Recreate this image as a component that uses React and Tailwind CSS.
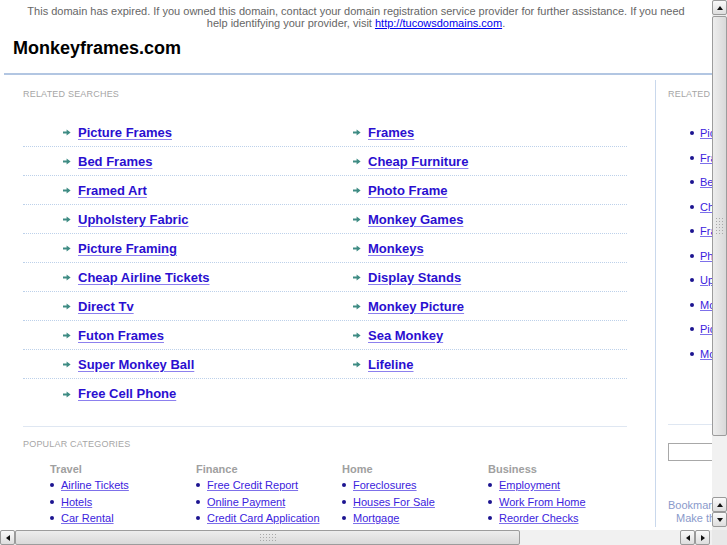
import React from "react";

const related = [
  ["Picture Frames", "Frames"],
  ["Bed Frames", "Cheap Furniture"],
  ["Framed Art", "Photo Frame"],
  ["Upholstery Fabric", "Monkey Games"],
  ["Picture Framing", "Monkeys"],
  ["Cheap Airline Tickets", "Display Stands"],
  ["Direct Tv", "Monkey Picture"],
  ["Futon Frames", "Sea Monkey"],
  ["Super Monkey Ball", "Lifeline"],
  ["Free Cell Phone", null],
];

const sideLinks = [
  "Picture Frames",
  "Frames",
  "Bed Frames",
  "Cheap Furniture",
  "Framed Art",
  "Photo Frame",
  "Upholstery Fabric",
  "Monkey Games",
  "Picture Framing",
  "Monkeys",
];

const categories = [
  { title: "Travel", links: ["Airline Tickets", "Hotels", "Car Rental"] },
  { title: "Finance", links: ["Free Credit Report", "Online Payment", "Credit Card Application"] },
  { title: "Home", links: ["Foreclosures", "Houses For Sale", "Mortgage"] },
  { title: "Business", links: ["Employment", "Work From Home", "Reorder Checks"] },
];

function Arrow() {
  return (
    <svg width="8" height="7" viewBox="0 0 8 7" className="shrink-0">
      <path d="M0 2.6h3.6V0.4L7.6 3.5 3.6 6.6V4.4H0z" fill="#3f8c84" />
    </svg>
  );
}

function Bullet() {
  return <span className="block w-[4px] h-[4px] rounded-full bg-[#1c1490] shrink-0" />;
}

function RelItem({ text }) {
  return (
    <div className="flex items-center gap-[7px] h-full pt-[1px]">
      <Arrow />
      <a className="text-[13px] font-bold text-[#2a0fd0] underline decoration-[#8c80ee] underline-offset-[2px] whitespace-nowrap">
        {text}
      </a>
    </div>
  );
}

function Tri({ dir }) {
  const d =
    dir === "up"
      ? "M0 4L3 0L6 4z"
      : dir === "down"
      ? "M0 0L6 0L3 4z"
      : dir === "left"
      ? "M4 0L4 6L0 3z"
      : "M0 0L4 3L0 6z";
  const w = dir === "up" || dir === "down" ? 6 : 4;
  const h = dir === "up" || dir === "down" ? 4 : 6;
  return (
    <svg width={w} height={h} viewBox={`0 0 ${w} ${h}`}>
      <path d={d} fill="#111" />
    </svg>
  );
}

function SBtn({ dir }) {
  return (
    <div className="w-[15px] h-[15px] shrink-0 flex items-center justify-center border border-[#9a9a9a] rounded-[2px] bg-gradient-to-b from-[#fafafa] to-[#dedede]">
      <Tri dir={dir} />
    </div>
  );
}

function Grip({ vertical }) {
  const cols = vertical ? 3 : 6;
  const rows = vertical ? 6 : 3;
  return (
    <div
      className="grid gap-[2px]"
      style={{ gridTemplateColumns: `repeat(${cols}, 1px)` }}
    >
      {Array.from({ length: cols * rows }).map((_, i) => (
        <span key={i} className="block w-[1px] h-[1px] bg-[#a8a8a8]" />
      ))}
    </div>
  );
}

export default function App() {
  return (
    <div className="w-[727px] h-[545px] flex flex-col overflow-hidden bg-white font-['Liberation_Sans',Arial,sans-serif]">
      <div className="flex flex-1 min-h-0">
        {/* page */}
        <div className="flex-1 min-w-0 overflow-hidden">
          <div className="pt-[5px] text-center text-[11px] leading-[12px] text-[#666] px-[20px]">
            This domain has expired. If you owned this domain, contact your domain registration service provider for further assistance. If you need help identifying your provider, visit{" "}
            <a className="text-[#0000ee] underline">http://tucowsdomains.com</a>.
          </div>
          <div className="mt-[8px] pl-[13px] text-[18px] leading-[22px] font-bold text-black">
            Monkeyframes.com
          </div>
          <div className="mt-[14px] ml-[4px] w-[860px] border-t-2 border-[#b2c6e2] flex">
            {/* left */}
            <div className="w-[651px] shrink-0 pl-[19px] pr-[28px]">
              <div className="pt-[14px] text-[9px] leading-[11px] text-[#a6a6a6] tracking-[0.2px]">
                RELATED SEARCHES
              </div>
              <div className="mt-[18px]">
                {related.map(([a, b], i) => (
                  <div
                    key={i}
                    className={
                      "flex h-[29px] " +
                      (i < related.length - 1 ? "border-b border-dotted border-[#bdd1ea]" : "")
                    }
                  >
                    <div className="w-[290px] pl-[40px]">
                      <RelItem text={a} />
                    </div>
                    <div className="flex-1 pl-[40px]">{b && <RelItem text={b} />}</div>
                  </div>
                ))}
              </div>
              <div className="mt-[18px] border-t border-[#dfe7f2]" />
              <div className="mt-[12px] text-[9px] leading-[11px] text-[#a6a6a6] tracking-[0.2px]">
                POPULAR CATEGORIES
              </div>
              <div className="mt-[13px] pl-[27px] flex">
                {categories.map((c) => (
                  <div key={c.title} className="w-[146px] shrink-0">
                    <div className="text-[11px] leading-[13px] font-bold text-[#a0a0a0]">{c.title}</div>
                    <ul className="mt-[1px]">
                      {c.links.map((l) => (
                        <li key={l} className="h-[16.5px] flex items-center gap-[7px]">
                          <Bullet />
                          <a className="text-[11px] text-[#3b22dd] underline decoration-[#7d70ea] whitespace-nowrap">
                            {l}
                          </a>
                        </li>
                      ))}
                    </ul>
                  </div>
                ))}
              </div>
            </div>
            {/* sidebar */}
            <div className="w-[200px] shrink-0 mt-[5px] border-l border-[#c9d8ec] pl-[12px]">
              <div className="pt-[9px] text-[9px] leading-[11px] text-[#a6a6a6] tracking-[0.2px]">
                RELATED SEARCHES
              </div>
              <ul className="mt-[21px] pl-[22px]">
                {sideLinks.map((l, i) => (
                  <li key={i} className="h-[24.5px] flex items-center gap-[6px]">
                    <Bullet />
                    <a className="text-[11px] text-[#3b22dd] underline decoration-[#7d70ea] whitespace-nowrap">
                      {l}
                    </a>
                  </li>
                ))}
              </ul>
              <div className="mt-[58px] border-t border-[#dfe7f2]" />
              <div className="mt-[18px] w-[140px] h-[18px] border border-[#a8a8a8] bg-white" />
              <div className="mt-[38px] text-[11px] leading-[13px] text-[#8a9acb] whitespace-nowrap">
                Bookmark this page
              </div>
              <div className="pl-[8px] text-[11px] leading-[13px] text-[#8a9acb] whitespace-nowrap">
                Make this your homepage
              </div>
            </div>
          </div>
        </div>
        {/* vertical scrollbar */}
        <div className="w-[15px] shrink-0 flex flex-col bg-[#eeeeee] pb-[3px]">
          <SBtn dir="up" />
          <div className="mt-[1px] h-[420px] shrink-0 border border-[#9c9c9c] rounded-[2px] bg-gradient-to-r from-[#ededed] to-[#d9d9d9] flex items-center justify-center">
            <Grip vertical />
          </div>
          <div className="flex-1 bg-[#f1f1f1]" />
          <SBtn dir="up" />
          <SBtn dir="down" />
        </div>
      </div>
      {/* horizontal scrollbar */}
      <div className="h-[15px] shrink-0 flex bg-[#eeeeee]">
        <SBtn dir="left" />
        <div className="w-[505px] shrink-0 border border-[#9c9c9c] rounded-[2px] bg-gradient-to-b from-[#ededed] to-[#d9d9d9] flex items-center justify-center">
          <Grip />
        </div>
        <div className="flex-1 bg-[#f1f1f1]" />
        <SBtn dir="left" />
        <SBtn dir="right" />
        <div className="w-[2px] shrink-0 bg-[#f1f1f1]" />
        <div className="w-[15px] shrink-0 bg-[#e8e8e8]" />
      </div>
    </div>
  );
}
